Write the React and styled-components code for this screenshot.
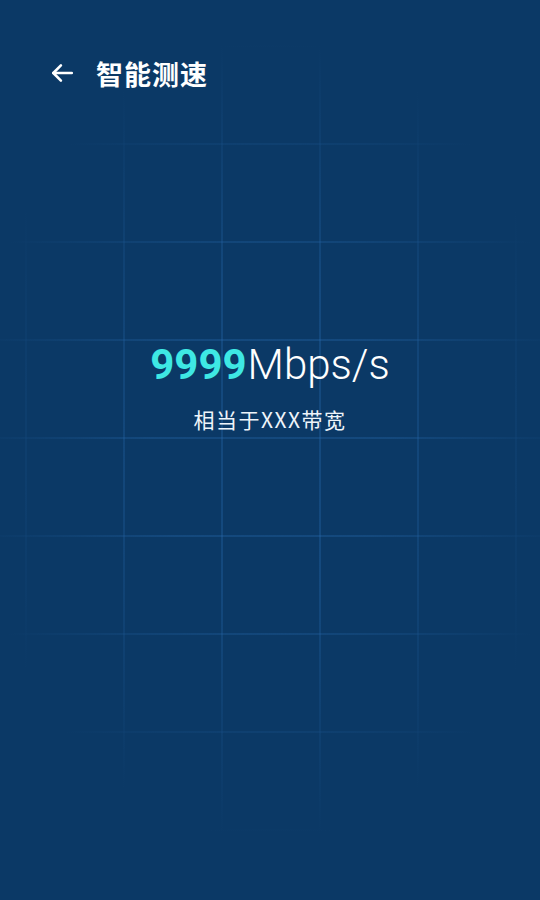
import React from "react";
import styled, { createGlobalStyle } from "styled-components";

const GlobalStyle = createGlobalStyle`
    html, body {
        margin: 0;
        padding: 0;
        background: #0b3966;
    }
`;

const App = () => {
    return (
        <>
            <GlobalStyle />
            <Page>
                <Header>
                    <BackBtn aria-label="back">
                        <svg width="26" height="26" viewBox="0 0 24 24" fill="none" stroke="#ffffff" strokeWidth="2.4" strokeLinecap="round" strokeLinejoin="round">
                            <path d="M21 12H4" />
                            <path d="M11 5l-7 7 7 7" />
                        </svg>
                    </BackBtn>
                    <Title>智能测速</Title>
                </Header>
                <Main>
                    <Speed>
                        <Value>9999</Value>
                        <Unit>Mbps/s</Unit>
                    </Speed>
                    <Sub>相当于XXX带宽</Sub>
                </Main>
            </Page>
        </>
    );
};

export default App;

// faint grid behind the result, fading out toward the edges
const Page = styled.div`
    width: 540px;
    height: 900px;
    display: flex;
    flex-direction: column;
    background-color: #0b3966;
    background-image:
        radial-gradient(ellipse 300px 400px at 270px 440px, rgba(11, 57, 102, 0) 40%, #0b3966 100%),
        linear-gradient(to right, rgba(40, 105, 175, 0.32) 2px, transparent 2px),
        linear-gradient(to bottom, rgba(40, 105, 175, 0.32) 2px, transparent 2px);
    background-size: 100% 100%, 98px 98px, 98px 98px;
    background-position: 0 0, 25px 0, 0 45px;
    background-repeat: no-repeat, repeat, repeat;
    font-family: Roboto, "Noto Sans CJK SC", sans-serif;
    color: #ffffff;
`;

const Header = styled.div`
    height: 146px;
    display: flex;
    align-items: center;
    padding-left: 48px;
    gap: 20px;
`;

const BackBtn = styled.button`
    border: none;
    background: none;
    padding: 0;
    width: 28px;
    height: 28px;
    display: flex;
    align-items: center;
    justify-content: center;
`;

const Title = styled.div`
    font-family: "Noto Sans CJK SC", sans-serif;
    font-size: 27px;
    font-weight: 700;
    letter-spacing: 1px;
`;

const Main = styled.div`
    margin-top: 194px;
    display: flex;
    flex-direction: column;
    align-items: center;
`;

const Speed = styled.div`
    height: 50px;
    display: flex;
    align-items: baseline;
    line-height: 50px;
    font-size: 42px;
`;

const Value = styled.span`
    color: #3ee8e4;
    font-weight: 700;
`;

const Unit = styled.span`
    font-weight: 300;
    margin-left: 1px;
`;

const Sub = styled.div`
    margin-top: 16px;
    font-family: "Noto Sans CJK SC", sans-serif;
    font-size: 21px;
    letter-spacing: 1.5px;
    line-height: 26px;
    color: #eef4fa;
`;
